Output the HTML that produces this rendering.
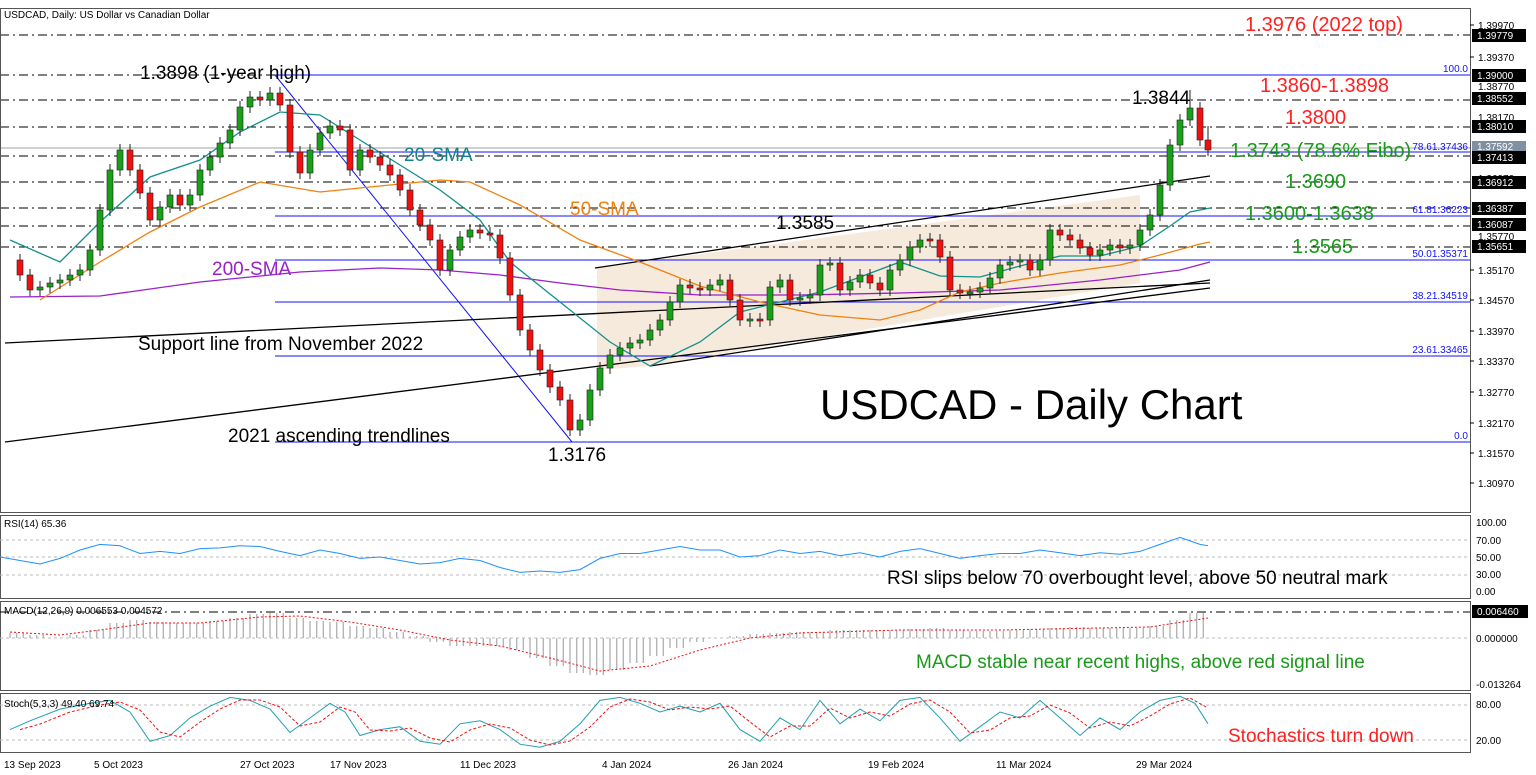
<!DOCTYPE html>
<html><head><meta charset="utf-8"><style>
html,body{margin:0;padding:0;background:#fff;}
svg{display:block;font-family:"Liberation Sans",Arial,sans-serif;}
</style></head><body>
<svg width="1536" height="775" viewBox="0 0 1536 775" xmlns="http://www.w3.org/2000/svg">
<rect width="1536" height="775" fill="#fff"/>
<polygon points="597,268 1140,195 1140,283 650,366 597,370" fill="#f5e6d6" opacity="0.85"/>
<g stroke="#000" stroke-width="1" stroke-dasharray="9,4,2,4" fill="none">
<line x1="0" y1="35" x2="1470" y2="35"/><line x1="0" y1="75" x2="1470" y2="75"/>
<line x1="0" y1="100" x2="1470" y2="100"/><line x1="0" y1="127" x2="1470" y2="127"/>
<line x1="0" y1="156" x2="1470" y2="156"/><line x1="0" y1="182" x2="1470" y2="182"/>
<line x1="0" y1="208" x2="1470" y2="208"/><line x1="0" y1="226" x2="1470" y2="226"/>
<line x1="0" y1="247" x2="1470" y2="247"/>
</g>
<line x1="0" y1="148" x2="1470" y2="148" stroke="#a0a0a0"/>
<g stroke="#1010ff" stroke-width="1">
<line x1="275" y1="75" x2="1470" y2="75"/><line x1="275" y1="152" x2="1470" y2="152"/>
<line x1="275" y1="216" x2="1470" y2="216"/><line x1="275" y1="260" x2="1470" y2="260"/>
<line x1="275" y1="302" x2="1470" y2="302"/><line x1="275" y1="356" x2="1470" y2="356"/>
<line x1="275" y1="442" x2="1470" y2="442"/><line x1="275" y1="75" x2="572" y2="442"/>
</g>
<g fill="#1010ff" font-size="10" text-anchor="end">
<text x="1468" y="72">100.0</text><text x="1468" y="150">78.61.37436</text>
<text x="1468" y="213">61.81.36223</text><text x="1468" y="257">50.01.35371</text>
<text x="1468" y="299">38.21.34519</text><text x="1468" y="353">23.61.33465</text>
<text x="1468" y="439">0.0</text>
</g>
<g stroke="#000" stroke-width="1.3">
<line x1="5" y1="343" x2="1210" y2="283"/><line x1="5" y1="442" x2="1210" y2="288"/>
<line x1="595" y1="268" x2="1210" y2="176"/><line x1="650" y1="366" x2="1210" y2="280"/>
</g>
<g fill="none" stroke-width="1.3">
<polyline stroke="#9a20c8" points="10,297 100,296 200,282 300,272 380,268 440,270 500,275 560,283 620,290 700,295 800,295 900,293 1000,290 1100,280 1180,270 1210,262"/>
<polyline stroke="#f08010" points="40,300 100,262 150,232 200,207 260,182 320,192 380,186 440,180 470,182 520,205 580,240 640,262 700,286 760,302 820,315 880,320 920,310 960,292 1000,283 1060,273 1120,265 1160,255 1200,244 1210,242"/>
<polyline stroke="#12908a" points="10,240 60,262 100,222 150,177 200,160 240,132 280,112 320,115 360,140 400,165 440,190 480,220 510,262 560,302 610,342 650,366 700,342 740,312 780,302 820,292 860,277 900,262 940,276 980,277 1020,266 1060,256 1100,256 1140,246 1170,226 1190,212 1210,208"/>
</g>
<!-- wicks -->
<path fill="none" stroke="#222" stroke-width="1" d="M20,254V281M30,269V296M40,281V296M50,277V293M60,274V289M70,269V286M80,264V281M90,244V276M100,204V256M110,164V216M120,144V176M130,144V176M140,164V199M150,187V226M160,201V226M170,189V213M180,189V211M190,189V211M200,164V201M210,151V176M220,137V163M230,124V149M240,101V136M250,91V113M260,91V106M270,87V106M280,87V111M290,99V158M300,146V179M310,144V179M320,127V156M330,120V139M340,120V136M350,124V176M360,144V176M370,144V163M380,151V171M390,159V181M400,169V196M410,184V216M420,204V231M430,219V246M440,234V276M450,244V276M460,231V256M470,224V243M480,224V239M490,227V241M500,229V264M510,252V301M520,289V336M530,324V356M540,344V376M550,364V393M560,381V406M570,394V436M580,414V436M590,384V426M600,362V396M610,349V374M620,342V361M630,337V354M640,334V349M650,324V346M660,314V336M670,296V326M680,279V308M690,279V294M700,282V296M710,279V296M720,274V291M730,274V306M740,294V326M750,313V327M760,313V327M770,281V326M780,274V293M790,274V306M800,292V306M810,289V304M820,259V301M830,257V271M840,257V296M850,276V296M860,269V288M870,269V289M880,277V296M890,264V296M900,254V276M910,241V266M920,234V253M930,233V247M940,234V263M950,251V296M960,284V299M970,286V299M980,282V298M990,272V294M1000,259V284M1010,256V271M1020,254V268M1030,254V276M1040,254V276M1050,224V266M1060,224V241M1070,229V246M1080,234V254M1090,242V261M1100,244V261M1110,239V256M1120,239V254M1130,239V254M1140,224V251M1150,209V236M1160,179V221M1170,139V191M1180,114V151M1190,90V126M1200,102V146M1208,126V156"/>
<!-- green bodies -->
<g fill="#18a018" stroke="#222" stroke-width="0.6">
<rect x="37" y="287" width="6" height="3"/><rect x="47" y="283" width="6" height="4"/><rect x="57" y="280" width="6" height="3"/><rect x="67" y="275" width="6" height="5"/><rect x="77" y="270" width="6" height="5"/><rect x="87" y="250" width="6" height="20"/><rect x="97" y="210" width="6" height="40"/><rect x="107" y="170" width="6" height="40"/><rect x="117" y="150" width="6" height="20"/>
<rect x="157" y="207" width="6" height="13"/><rect x="167" y="195" width="6" height="12"/><rect x="187" y="195" width="6" height="10"/><rect x="197" y="170" width="6" height="25"/><rect x="207" y="157" width="6" height="13"/><rect x="217" y="143" width="6" height="14"/><rect x="227" y="130" width="6" height="13"/><rect x="237" y="107" width="6" height="23"/><rect x="247" y="97" width="6" height="10"/><rect x="267" y="93" width="6" height="7"/>
<rect x="307" y="150" width="6" height="23"/><rect x="317" y="133" width="6" height="17"/><rect x="327" y="126" width="6" height="7"/><rect x="357" y="150" width="6" height="20"/>
<rect x="447" y="250" width="6" height="20"/><rect x="457" y="237" width="6" height="13"/><rect x="467" y="230" width="6" height="7"/>
<rect x="577" y="420" width="6" height="10"/><rect x="587" y="390" width="6" height="30"/><rect x="597" y="368" width="6" height="22"/><rect x="607" y="355" width="6" height="13"/><rect x="617" y="348" width="6" height="7"/><rect x="627" y="343" width="6" height="5"/><rect x="637" y="340" width="6" height="3"/><rect x="647" y="330" width="6" height="10"/><rect x="657" y="320" width="6" height="10"/><rect x="667" y="302" width="6" height="18"/><rect x="677" y="285" width="6" height="17"/>
<rect x="707" y="285" width="6" height="5"/><rect x="717" y="280" width="6" height="5"/><rect x="747" y="319" width="6" height="2"/><rect x="767" y="287" width="6" height="33"/><rect x="777" y="280" width="6" height="7"/><rect x="797" y="298" width="6" height="2"/><rect x="807" y="295" width="6" height="3"/><rect x="817" y="265" width="6" height="30"/><rect x="827" y="263" width="6" height="2"/><rect x="847" y="282" width="6" height="8"/><rect x="857" y="275" width="6" height="7"/>
<rect x="887" y="270" width="6" height="20"/><rect x="897" y="260" width="6" height="10"/><rect x="907" y="247" width="6" height="13"/><rect x="917" y="240" width="6" height="7"/><rect x="967" y="292" width="6" height="2"/><rect x="977" y="288" width="6" height="4"/><rect x="987" y="278" width="6" height="10"/><rect x="997" y="265" width="6" height="13"/><rect x="1007" y="262" width="6" height="3"/><rect x="1017" y="260" width="6" height="2"/><rect x="1037" y="260" width="6" height="10"/><rect x="1047" y="230" width="6" height="30"/>
<rect x="1097" y="250" width="6" height="5"/><rect x="1107" y="245" width="6" height="5"/><rect x="1127" y="245" width="6" height="3"/><rect x="1137" y="230" width="6" height="15"/><rect x="1147" y="215" width="6" height="15"/><rect x="1157" y="185" width="6" height="30"/><rect x="1167" y="145" width="6" height="40"/><rect x="1177" y="120" width="6" height="25"/><rect x="1187" y="108" width="6" height="12"/>
</g>
<!-- red bodies -->
<g fill="#f01010" stroke="#222" stroke-width="0.6">
<rect x="17" y="260" width="6" height="15"/><rect x="27" y="275" width="6" height="15"/><rect x="127" y="150" width="6" height="20"/><rect x="137" y="170" width="6" height="23"/><rect x="147" y="193" width="6" height="27"/><rect x="177" y="195" width="6" height="10"/><rect x="257" y="97" width="6" height="3"/><rect x="277" y="93" width="6" height="12"/><rect x="287" y="105" width="6" height="47"/><rect x="297" y="152" width="6" height="21"/>
<rect x="337" y="126" width="6" height="4"/><rect x="347" y="130" width="6" height="40"/><rect x="367" y="150" width="6" height="7"/><rect x="377" y="157" width="6" height="8"/><rect x="387" y="165" width="6" height="10"/><rect x="397" y="175" width="6" height="15"/><rect x="407" y="190" width="6" height="20"/><rect x="417" y="210" width="6" height="15"/><rect x="427" y="225" width="6" height="15"/><rect x="437" y="240" width="6" height="30"/>
<rect x="477" y="230" width="6" height="3"/><rect x="487" y="233" width="6" height="2"/><rect x="497" y="235" width="6" height="23"/><rect x="507" y="258" width="6" height="37"/><rect x="517" y="295" width="6" height="35"/><rect x="527" y="330" width="6" height="20"/><rect x="537" y="350" width="6" height="20"/><rect x="547" y="370" width="6" height="17"/><rect x="557" y="387" width="6" height="13"/><rect x="567" y="400" width="6" height="30"/>
<rect x="687" y="285" width="6" height="3"/><rect x="697" y="288" width="6" height="2"/><rect x="727" y="280" width="6" height="20"/><rect x="737" y="300" width="6" height="20"/><rect x="757" y="319" width="6" height="2"/><rect x="787" y="280" width="6" height="20"/><rect x="837" y="263" width="6" height="27"/><rect x="867" y="275" width="6" height="8"/><rect x="877" y="283" width="6" height="7"/>
<rect x="927" y="239" width="6" height="2"/><rect x="937" y="240" width="6" height="17"/><rect x="947" y="257" width="6" height="33"/><rect x="957" y="290" width="6" height="3"/><rect x="1027" y="260" width="6" height="10"/><rect x="1057" y="230" width="6" height="5"/><rect x="1067" y="235" width="6" height="5"/><rect x="1077" y="240" width="6" height="8"/><rect x="1087" y="248" width="6" height="7"/><rect x="1117" y="245" width="6" height="3"/><rect x="1197" y="108" width="6" height="32"/><rect x="1205" y="140" width="6" height="10"/>
</g>
<!-- panels -->
<g fill="none" stroke="#555">
<rect x="0.5" y="8.5" width="1470" height="504"/><rect x="0.5" y="515.5" width="1470" height="83"/>
<rect x="0.5" y="601.5" width="1470" height="89"/><rect x="0.5" y="693.5" width="1470" height="59"/>
</g>
<g stroke="#bbb" stroke-dasharray="3,3">
<line x1="0" y1="540" x2="1470" y2="540"/><line x1="0" y1="557" x2="1470" y2="557"/><line x1="0" y1="575" x2="1470" y2="575"/>
<line x1="0" y1="638" x2="1470" y2="638"/><line x1="0" y1="705" x2="1470" y2="705"/><line x1="0" y1="740" x2="1470" y2="740"/>
</g>
<line x1="0" y1="612" x2="1470" y2="612" stroke="#000" stroke-dasharray="9,4,2,4"/>
<!-- RSI -->
<polyline fill="none" stroke="#1e90ff" points="0,557 20,560.5 40,564 60,558.4 80,550 100,544.4 120,545.8 140,553.5 160,551.4 180,553.5 200,548.6 220,547.9 240,545.8 260,546.5 280,551.4 300,555.6 320,550 340,553.5 360,558.4 380,557 400,560.5 420,564 440,562.6 460,558.4 480,560.5 500,567.5 520,572.4 540,571 560,572.4 580,569.6 600,558.4 620,553.5 640,553.5 660,550 680,546.5 700,550 720,550 740,557 760,555.6 780,550 800,553.5 820,551.4 840,555.6 860,552.8 880,557 900,551.4 920,548.6 940,553.5 960,558.4 980,555.6 1000,553.5 1020,553.5 1040,550 1060,552.8 1080,555.6 1100,552.8 1120,554.2 1140,551.4 1160,544.4 1180,537.4 1200,544.4 1208,545.8"/>
<!-- MACD histogram -->
<g id="hb"><path fill="none" stroke="#b0b0b0" stroke-width="1.3" d="M10,638v-5M30,638v-3M70,638v-3M90,638v-8M110,638v-15M130,638v-18M150,638v-16M170,638v-15M190,638v-15M210,638v-17M230,638v-20M250,638v-24M270,638v-25M290,638v-20M310,638v-17M330,638v-16M350,638v-12M370,638v-10M390,638v-6M410,638v-2M430,638v4M450,638v8M470,638v8M490,638v8M510,638v12M530,638v20M550,638v28M570,638v35M590,638v37M610,638v32M630,638v25M650,638v18M670,638v10M690,638v4M730,638v-2M750,638v-4M770,638v-5M790,638v-6M810,638v-6M830,638v-8M850,638v-8M870,638v-8M890,638v-8M910,638v-9M930,638v-10M950,638v-8M970,638v-7M990,638v-7M1010,638v-8M1030,638v-9M1050,638v-10M1070,638v-11M1090,638v-10M1110,638v-10M1130,638v-10M1150,638v-12M1170,638v-18M1190,638v-25"/></g>
<use href="#hb" transform="translate(6.7,0)"/><use href="#hb" transform="translate(13.3,0)"/>
<polyline fill="none" stroke="#f01010" stroke-dasharray="2,2" points="10,632 60,635 100,630 150,623 200,623 260,617 300,616 350,622 400,630 450,640 500,646 550,658 600,671 650,666 700,650 750,638 800,633 900,630 1000,630 1100,628 1150,627 1208,618"/>
<!-- Stoch -->
<g id="st"><polyline fill="none" stroke="#20a0b0" points="10,729.6 30,720.8 60,709.1 90,703.3 110,700.4 130,712 150,741.3 170,735.5 190,717.9 210,706.2 230,697.4 250,700.4 270,709.1 290,732.5 310,717.9 330,703.3 345,712 360,735.5 380,729.6 400,726.7 420,741.3 440,744.2 460,723.8 480,720.8 500,729.6 520,744.2 540,747.2 560,741.3 580,723.8 600,700.4 620,697.4 640,703.3 660,712 680,706.2 700,712 720,703.3 740,729.6 760,741.3 780,717.9 800,729.6 820,700.4 840,723.8 860,709.1 880,720.8 900,700.4 920,697.4 940,717.9 960,741.3 980,726.7 1000,712 1020,717.9 1040,700.4 1060,717.9 1080,735.5 1100,717.9 1120,729.6 1140,712 1160,700.4 1180,696.3 1195,703.3 1208,723.8"/></g>
<polyline fill="none" stroke="#f01010" stroke-dasharray="3,2" points="20,729.6 40,724 70,712 100,705 120,702 140,710 160,732 180,737 200,722 220,709 240,700 260,700 280,707 300,726 320,722 340,707 355,712 370,730 390,731 410,728 430,738 450,742 470,730 490,724 510,728 530,740 550,745 570,741 590,727 610,707 630,699 650,702 670,710 690,707 710,709 730,706 750,722 770,737 790,726 810,726 830,708 850,718 870,712 890,716 910,704 930,700 950,712 970,733 990,730 1010,718 1030,716 1050,705 1070,713 1090,728 1110,722 1130,726 1150,716 1170,704 1190,698 1208,708"/>
<!-- right axis -->
<g font-size="10" fill="#000">
<text x="1478" y="29">1.39970</text><text x="1478" y="61">1.39370</text><text x="1478" y="90">1.38770</text>
<text x="1478" y="121">1.38170</text><text x="1478" y="182">1.36970</text><text x="1478" y="240">1.35770</text>
<text x="1478" y="274">1.35170</text><text x="1478" y="304">1.34570</text><text x="1478" y="335">1.33970</text>
<text x="1478" y="365">1.33370</text><text x="1478" y="396">1.32770</text><text x="1478" y="427">1.32170</text>
<text x="1478" y="457">1.31570</text><text x="1478" y="487">1.30970</text>
<text x="1476" y="526">100.00</text><text x="1476" y="544">70.00</text><text x="1476" y="561">50.00</text>
<text x="1476" y="578">30.00</text><text x="1476" y="595">0.00</text>
<text x="1476" y="642">0.000000</text><text x="1476" y="688">-0.013264</text>
<text x="1476" y="708">80.00</text><text x="1476" y="744">20.00</text>
</g>
<g stroke="#000"><line x1="1470" y1="25" x2="1474" y2="25"/><line x1="1470" y1="57" x2="1474" y2="57"/><line x1="1470" y1="270" x2="1474" y2="270"/><line x1="1470" y1="300" x2="1474" y2="300"/><line x1="1470" y1="331" x2="1474" y2="331"/><line x1="1470" y1="361" x2="1474" y2="361"/><line x1="1470" y1="392" x2="1474" y2="392"/><line x1="1470" y1="423" x2="1474" y2="423"/><line x1="1470" y1="453" x2="1474" y2="453"/><line x1="1470" y1="483" x2="1474" y2="483"/></g>
<g font-size="10">
<rect x="1472" y="29" width="54" height="13" fill="#000"/><text x="1477" y="39" fill="#fff">1.39779</text>
<rect x="1472" y="69" width="54" height="13" fill="#000"/><text x="1477" y="79" fill="#fff">1.39000</text>
<rect x="1472" y="92" width="54" height="13" fill="#000"/><text x="1477" y="102" fill="#fff">1.38552</text>
<rect x="1472" y="120" width="54" height="13" fill="#000"/><text x="1477" y="130" fill="#fff">1.38010</text>
<rect x="1472" y="141" width="54" height="12" fill="#8090a0"/><text x="1477" y="150" fill="#fff">1.37592</text>
<rect x="1472" y="151" width="54" height="13" fill="#000"/><text x="1477" y="161" fill="#fff">1.37413</text>
<rect x="1472" y="176" width="54" height="13" fill="#000"/><text x="1477" y="186" fill="#fff">1.36912</text>
<rect x="1472" y="202" width="54" height="13" fill="#000"/><text x="1477" y="212" fill="#fff">1.36387</text>
<rect x="1472" y="218" width="54" height="13" fill="#000"/><text x="1477" y="228" fill="#fff">1.36087</text>
<rect x="1472" y="240" width="54" height="13" fill="#000"/><text x="1477" y="250" fill="#fff">1.35651</text>
<rect x="1472" y="605" width="56" height="13" fill="#000"/><text x="1477" y="615" fill="#fff">0.006460</text>
</g>
<g font-size="10" fill="#000">
<text x="4" y="18">USDCAD, Daily:  US Dollar vs Canadian Dollar</text>
<text x="4" y="527">RSI(14) 65.36</text>
<text x="4" y="614">MACD(12,26,9) 0.006553 0.004572</text>
<text x="4" y="707">Stoch(5,3,3) 49.40 69.74</text>
</g>
<g font-size="10" fill="#000">
<text x="4" y="768">13 Sep 2023</text><text x="94" y="768">5 Oct 2023</text><text x="240" y="768">27 Oct 2023</text>
<text x="330" y="768">17 Nov 2023</text><text x="460" y="768">11 Dec 2023</text><text x="602" y="768">4 Jan 2024</text>
<text x="728" y="768">26 Jan 2024</text><text x="868" y="768">19 Feb 2024</text><text x="996" y="768">11 Mar 2024</text>
<text x="1136" y="768">29 Mar 2024</text>
</g>
<g font-size="19">
<text x="140" y="79" fill="#000">1.3898 (1-year high)</text>
<text x="1245" y="31" fill="#ff2020" font-size="20">1.3976 (2022 top)</text>
<text x="1260" y="92" fill="#ff2020" font-size="20">1.3860-1.3898</text>
<text x="1132" y="104" fill="#000">1.3844</text>
<text x="1285" y="124" fill="#ff2020" font-size="20">1.3800</text>
<text x="1230" y="157" fill="#1a9a1a" font-size="20">1.3743 (78.6% Fibo)</text>
<text x="1285" y="188" fill="#1a9a1a" font-size="20">1.3690</text>
<text x="1245" y="220" fill="#1a9a1a" font-size="20">1.3600-1.3638</text>
<text x="1292" y="253" fill="#1a9a1a" font-size="20">1.3565</text>
<text x="404" y="161" fill="#12808a">20-SMA</text>
<text x="570" y="215" fill="#f08010">50-SMA</text>
<text x="212" y="275" fill="#9a20c8">200-SMA</text>
<text x="776" y="229" fill="#000">1.3585</text>
<text x="138" y="350" fill="#000">Support line from November 2022</text>
<text x="228" y="442" fill="#000">2021 ascending trendlines</text>
<text x="548" y="461" fill="#000">1.3176</text>
<text x="820" y="419" fill="#000" font-size="42">USDCAD - Daily Chart</text>
<text x="887" y="584" fill="#000">RSI slips below 70 overbought level, above 50 neutral mark</text>
<text x="916" y="668" fill="#1a9a1a">MACD stable near recent highs, above red signal line</text>
<text x="1228" y="742" fill="#ff2020">Stochastics turn down</text>
</g>
</svg>
</body></html>
